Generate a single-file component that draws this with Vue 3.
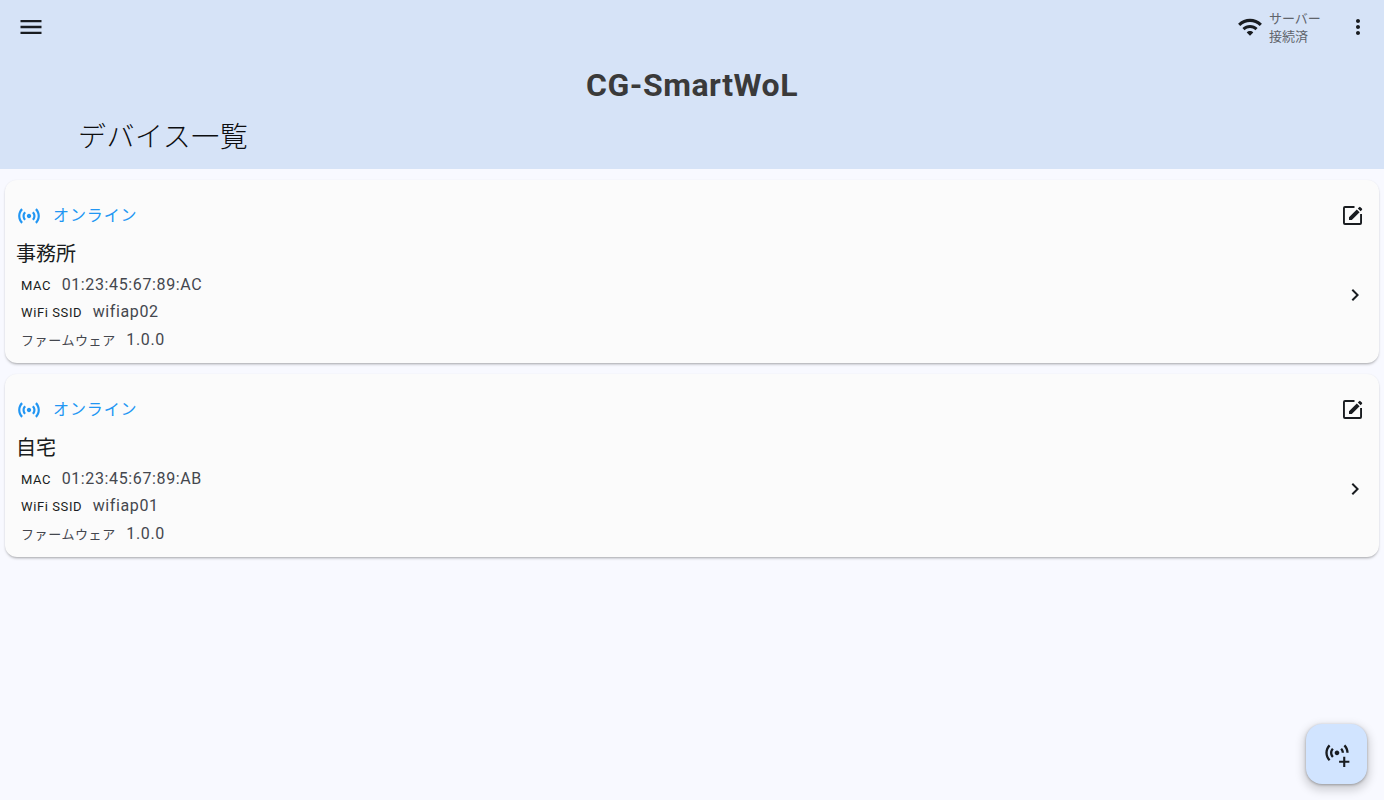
<script setup>
const devices = [
  { name: '事務所', mac: '01:23:45:67:89:AC', ssid: 'wifiap02', fw: '1.0.0' },
  { name: '自宅', mac: '01:23:45:67:89:AB', ssid: 'wifiap01', fw: '1.0.0' }
]
const sensors = 'M7.76 16.24C6.67 15.16 6 13.66 6 12s.67-3.16 1.76-4.24l1.42 1.42C8.45 9.9 8 10.9 8 12c0 1.1.45 2.1 1.17 2.83l-1.41 1.41zm8.48 0C17.33 15.16 18 13.66 18 12s-.67-3.16-1.76-4.24l-1.42 1.42C15.55 9.9 16 10.9 16 12c0 1.1-.45 2.1-1.17 2.83l1.41 1.41zM12 10c-1.1 0-2 .9-2 2s.9 2 2 2 2-.9 2-2-.9-2-2-2zm8 2c0 2.21-.9 4.21-2.35 5.65l1.42 1.42C20.88 17.26 22 14.76 22 12s-1.12-5.26-2.93-7.07l-1.42 1.42C19.1 7.79 20 9.79 20 12zM6.35 6.35L4.93 4.93C3.12 6.74 2 9.24 2 12s1.12 5.26 2.93 7.07l1.42-1.42C4.9 16.21 4 14.21 4 12s.9-4.21 2.35-5.65z'
</script>

<template>
  <div class="page">
    <header class="appbar">
      <div class="toolbar">
        <svg class="icon menu" viewBox="0 0 24 24" width="28" height="28"><path d="M3 18h18v-2H3v2zm0-5h18v-2H3v2zm0-7v2h18V6H3z" /></svg>
        <div class="status">
          <svg class="icon" viewBox="0 0 24 24" width="26" height="26"><path d="M1 9l2 2c4.97-4.97 13.03-4.97 18 0l2-2C16.93 2.93 7.08 2.93 1 9zm8 8l3 3 3-3c-1.65-1.66-4.34-1.66-6 0zm-4-4l2 2c2.76-2.76 7.24-2.76 10 0l2-2C15.14 9.14 8.87 9.14 5 13z" /></svg>
          <div class="status-text"><div>サーバー</div><div>接続済</div></div>
        </div>
        <svg class="icon more" viewBox="0 0 24 24" width="24" height="24"><path d="M12 8c1.1 0 2-.9 2-2s-.9-2-2-2-2 .9-2 2 .9 2 2 2zm0 2c-1.1 0-2 .9-2 2s.9 2 2 2 2-.9 2-2-.9-2-2-2zm0 6c-1.1 0-2 .9-2 2s.9 2 2 2 2-.9 2-2-.9-2-2-2z" /></svg>
      </div>
      <div class="brand">CG-SmartWoL</div>
      <h1 class="title">デバイス一覧</h1>
    </header>

    <main class="list">
      <article v-for="d in devices" :key="d.name" class="card">
        <div class="card-top">
          <svg class="online-icon" viewBox="0 0 24 24" width="26" height="26"><path :d="sensors" /></svg>
          <span class="online">オンライン</span>
          <svg class="icon edit" viewBox="0 0 24 24" width="24" height="24"><path d="M4 2h9.500v1.900H3.900v15.200h15.200V10H21v9a2 2 0 0 1-2 2H4a2 2 0 0 1-2-2V4a2 2 0 0 1 2-2zM8 13.300L15.800 5.500l2.800 2.800L10.800 16H8zM16.800 4.500l1.300-1.300a1 1 0 0 1 1.400 0l1.400 1.400a1 1 0 0 1 0 1.400l-1.300 1.300z" /></svg>
        </div>
        <div class="card-body">
          <div class="info">
            <div class="name">{{ d.name }}</div>
            <div class="row r-mac"><span class="label">MAC</span><span class="value">{{ d.mac }}</span></div>
            <div class="row r-ssid"><span class="label">WiFi SSID</span><span class="value">{{ d.ssid }}</span></div>
            <div class="row r-fw"><span class="label fw">ファームウェア</span><span class="value">{{ d.fw }}</span></div>
          </div>
          <svg class="icon chevron" viewBox="0 0 24 24" width="24" height="24"><path d="M10 6L8.590 7.410 13.170 12l-4.580 4.590L10 18l6-6z" /></svg>
        </div>
      </article>
    </main>

    <button class="fab" type="button" aria-label="追加">
      <svg viewBox="0 -1 24 24" width="28" height="28"><path d="M7.760 14.240C6.670 13.160 6 11.660 6 10s.67-3.160 1.760-4.240l1.420 1.420C8.450 7.900 8 8.900 8 10c0 1.100.45 2.100 1.170 2.830l-1.410 1.410zM14.830 7.170C15.550 7.900 16 8.900 16 10h2c0-1.660-.67-3.160-1.760-4.240l-1.410 1.410zM12 8c-1.100 0-2 .9-2 2s.9 2 2 2 2-.9 2-2-.9-2-2-2zM20 10h2c0-2.760-1.120-5.260-2.930-7.070l-1.420 1.420C19.100 5.790 20 7.790 20 10zM6.350 4.350L4.930 2.930C3.120 4.740 2 7.240 2 10s1.120 5.260 2.930 7.070l1.420-1.420C4.900 14.210 4 12.210 4 10s.9-4.210 2.350-5.650zM17.300 13.300h1.800v3.500h3.500v1.800h-3.500v3.500h-1.800v-3.500h-3.500v-1.800h3.500z" /></svg>
    </button>
  </div>
</template>

<style>
html, body { margin: 0; padding: 0; overflow: hidden; }
</style>

<style scoped>
.page {
  position: relative;
  width: 1384px;
  height: 800px;
  background: #f8f9ff;
  font-family: Roboto, "Noto Sans CJK JP", sans-serif;
  color: #191c20;
  overflow: hidden;
}
.appbar {
  height: 169px;
  background: #d6e3f7;
  box-sizing: border-box;
  padding-top: 15px;
}
.toolbar {
  display: flex;
  align-items: center;
  height: 24px;
  padding: 0 14px 0 16.5px;
}
.icon { fill: #191c20; flex: none; display: block; }
.status {
  margin-left: auto;
  display: flex;
  align-items: center;
  gap: 6px;
}
.status-text {
  font-size: 13px;
  line-height: 18px;
  color: #5f646b;
  width: 65px;
  padding-top: 2px;
}
.more { margin-left: 12px; }
.brand {
  margin-top: 26px;
  text-align: center;
  font-size: 32px;
  line-height: 40px;
  font-weight: 700;
  letter-spacing: 0.55px;
  color: #3a3a3a;
}
.title {
  margin: 15px 0 0 78px;
  font-size: 28px;
  line-height: 36px;
  font-weight: 300;
  letter-spacing: 0.5px;
  color: #0d0e10;
}
.list {
  padding: 11px 5px 0;
  display: flex;
  flex-direction: column;
  gap: 11px;
}
.card {
  height: 183px;
  box-sizing: border-box;
  background: #fbfbfb;
  border-radius: 12px;
  box-shadow: 0 2px 3px -1px rgba(0, 0, 0, 0.35), 0 0 2px rgba(0, 0, 0, 0.06);
  padding: 24px 14px 0 11px;
}
.card-top {
  display: flex;
  align-items: center;
  height: 24px;
}
.online-icon { fill: #2196f3; flex: none; margin-right: 11px; }
.online {
  font-size: 16px;
  line-height: 24px;
  color: #2196f3;
  letter-spacing: 0.9px;
}
.edit { margin-left: auto; }
.card-body {
  display: flex;
  align-items: center;
  justify-content: space-between;
}
.info { flex: 1; padding-bottom: 8px; }
.name {
  margin-top: 11px;
  font-size: 20px;
  line-height: 30px;
  color: #191c20;
  font-weight: 400;
}
.row {
  display: flex;
  align-items: baseline;
  padding-left: 5px;
  height: 27.5px;
  line-height: 27.5px;
}
.r-mac { margin-top: 1.5px; }
.label {
  font-size: 13px;
  color: #191c20;
  letter-spacing: 0.6px;
  margin-right: 10.5px;
}
.label.fw { color: #44474e; }
.value {
  font-size: 16px;
  color: #44474e;
  letter-spacing: 0.62px;
}
.chevron { margin-right: -2px; }
.fab {
  position: absolute;
  left: 1306px;
  top: 724px;
  width: 61px;
  height: 60px;
  border: 0;
  padding: 0;
  border-radius: 16px;
  background: #d1e4ff;
  box-shadow: 0 4px 8px 3px rgba(0, 0, 0, 0.15), 0 1px 3px rgba(0, 0, 0, 0.3);
  display: flex;
  align-items: center;
  justify-content: center;
}
.fab svg { fill: #191c20; }
</style>
